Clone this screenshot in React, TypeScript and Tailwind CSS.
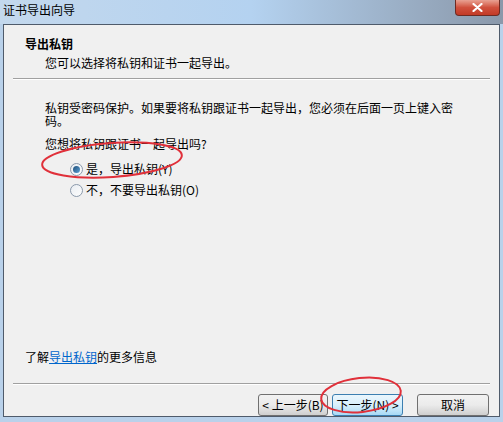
import React from 'react';

const font = { fontFamily: '"Noto Sans CJK SC", "Liberation Sans", sans-serif' };

const Radio: React.FC<{ checked?: boolean; label: string }> = ({ checked, label }) => (
  <div className="flex items-center h-4">
    <span className="relative w-[13px] h-[13px] rounded-full border border-[#8a99ab] bg-gradient-to-br from-[#e9edf2] to-[#fdfdfd] flex items-center justify-center mr-[3px]">
      {checked && (
        <span className="w-[7px] h-[7px] rounded-full bg-gradient-to-br from-[#1f4f7a] to-[#5da2d6]" />
      )}
    </span>
    <span className="text-[12px] leading-4 text-black">{label}</span>
  </div>
);

const Separator: React.FC = () => (
  <div className="mx-[9px]">
    <div className="h-px bg-[#a0a0a0]" />
    <div className="h-px bg-white" />
  </div>
);

const Button: React.FC<{ label: string; primary?: boolean; width: string }> = ({ label, primary, width }) => (
  <button
    className={`${width} h-[22px] rounded-[3px] border text-[12px] leading-none text-black flex items-center justify-center ${
      primary
        ? 'border-[#3c7fb1] bg-gradient-to-b from-[#eaf6fd] via-[#d9f0fc] to-[#a7d9f5]'
        : 'border-[#707070] bg-gradient-to-b from-[#f2f2f2] via-[#ebebeb] to-[#cfcfcf]'
    }`}
  >
    {label}
  </button>
);

export default function App() {
  return (
    <div className="relative w-[503px] h-[422px] overflow-hidden flex flex-col bg-[#b9d1ea]" style={font}>
      {/* title bar */}
      <div className="h-[24px] flex items-start justify-between bg-gradient-to-r from-[#c3d8ed] via-[#b4d2f0] to-[#8a98aa]">
        <span className="pl-[3px] pt-[2px] text-[12px] leading-4 text-black">证书导出向导</span>
        <div className="mr-[3px] w-[45px] h-[16px] rounded-b-[4px] border border-t-0 border-[#6e2a22] bg-gradient-to-b from-[#e8a193] via-[#d0503d] to-[#c23a26] flex items-center justify-center">
          <svg width="11" height="9" viewBox="0 0 11 9">
            <path d="M1.5 1 L9.5 8 M9.5 1 L1.5 8" stroke="#ffffff" strokeWidth="2.2" strokeLinecap="round" />
          </svg>
        </div>
      </div>

      {/* frame */}
      <div className="flex-1 flex flex-col px-[3px] pb-[5px]">
        <div className="flex-1 flex flex-col border border-[#4f5b6b] bg-[#f0f0f0]">
          <div className="pl-[21px] pt-[11px]">
            <div className="text-[12px] leading-4 font-bold text-black">导出私钥</div>
            <div className="mt-[3px] pl-[20px] text-[12px] leading-4 text-black">您可以选择将私钥和证书一起导出。</div>
          </div>
          <div className="mt-[7px]">
            <Separator />
          </div>

          <div className="pl-[41px] mt-[21px] text-[12px] leading-[13px] text-black">
            <div className="whitespace-nowrap">私钥受密码保护。如果要将私钥跟证书一起导出，您必须在后面一页上键入密</div>
            <div className="whitespace-nowrap">码。</div>
            <div className="mt-[10px] whitespace-nowrap">您想将私钥跟证书一起导出吗?</div>
            <div className="pl-[25px] mt-[11px] flex flex-col gap-[5px]">
              <Radio checked label="是，导出私钥(Y)" />
              <Radio label="不，不要导出私钥(O)" />
            </div>
          </div>

          <div className="flex-1" />

          <div className="pl-[21px] text-[12px] leading-4 text-black">
            了解<span className="text-[#0066cc] underline">导出私钥</span>的更多信息
          </div>
          <div className="mt-[18px]">
            <Separator />
          </div>
          <div className="mt-[9px] pr-[10px] flex justify-end">
            <Button label="< 上一步(B)" width="w-[70px]" />
            <div className="w-[4px]" />
            <Button label="下一步(N) >" width="w-[71px]" primary />
            <div className="w-[14px]" />
            <Button label="取消" width="w-[72px]" />
          </div>
        </div>
      </div>

      {/* red annotation ellipses */}
      <svg className="absolute inset-0 pointer-events-none" width="503" height="422">
        <ellipse cx="112" cy="160" rx="70" ry="17" transform="rotate(-4 112 160)" fill="none" stroke="#e0303a" strokeWidth="2" />
        <ellipse cx="361" cy="395" rx="40" ry="17" transform="rotate(-6 361 395)" fill="none" stroke="#e0303a" strokeWidth="2" />
      </svg>
    </div>
  );
}
